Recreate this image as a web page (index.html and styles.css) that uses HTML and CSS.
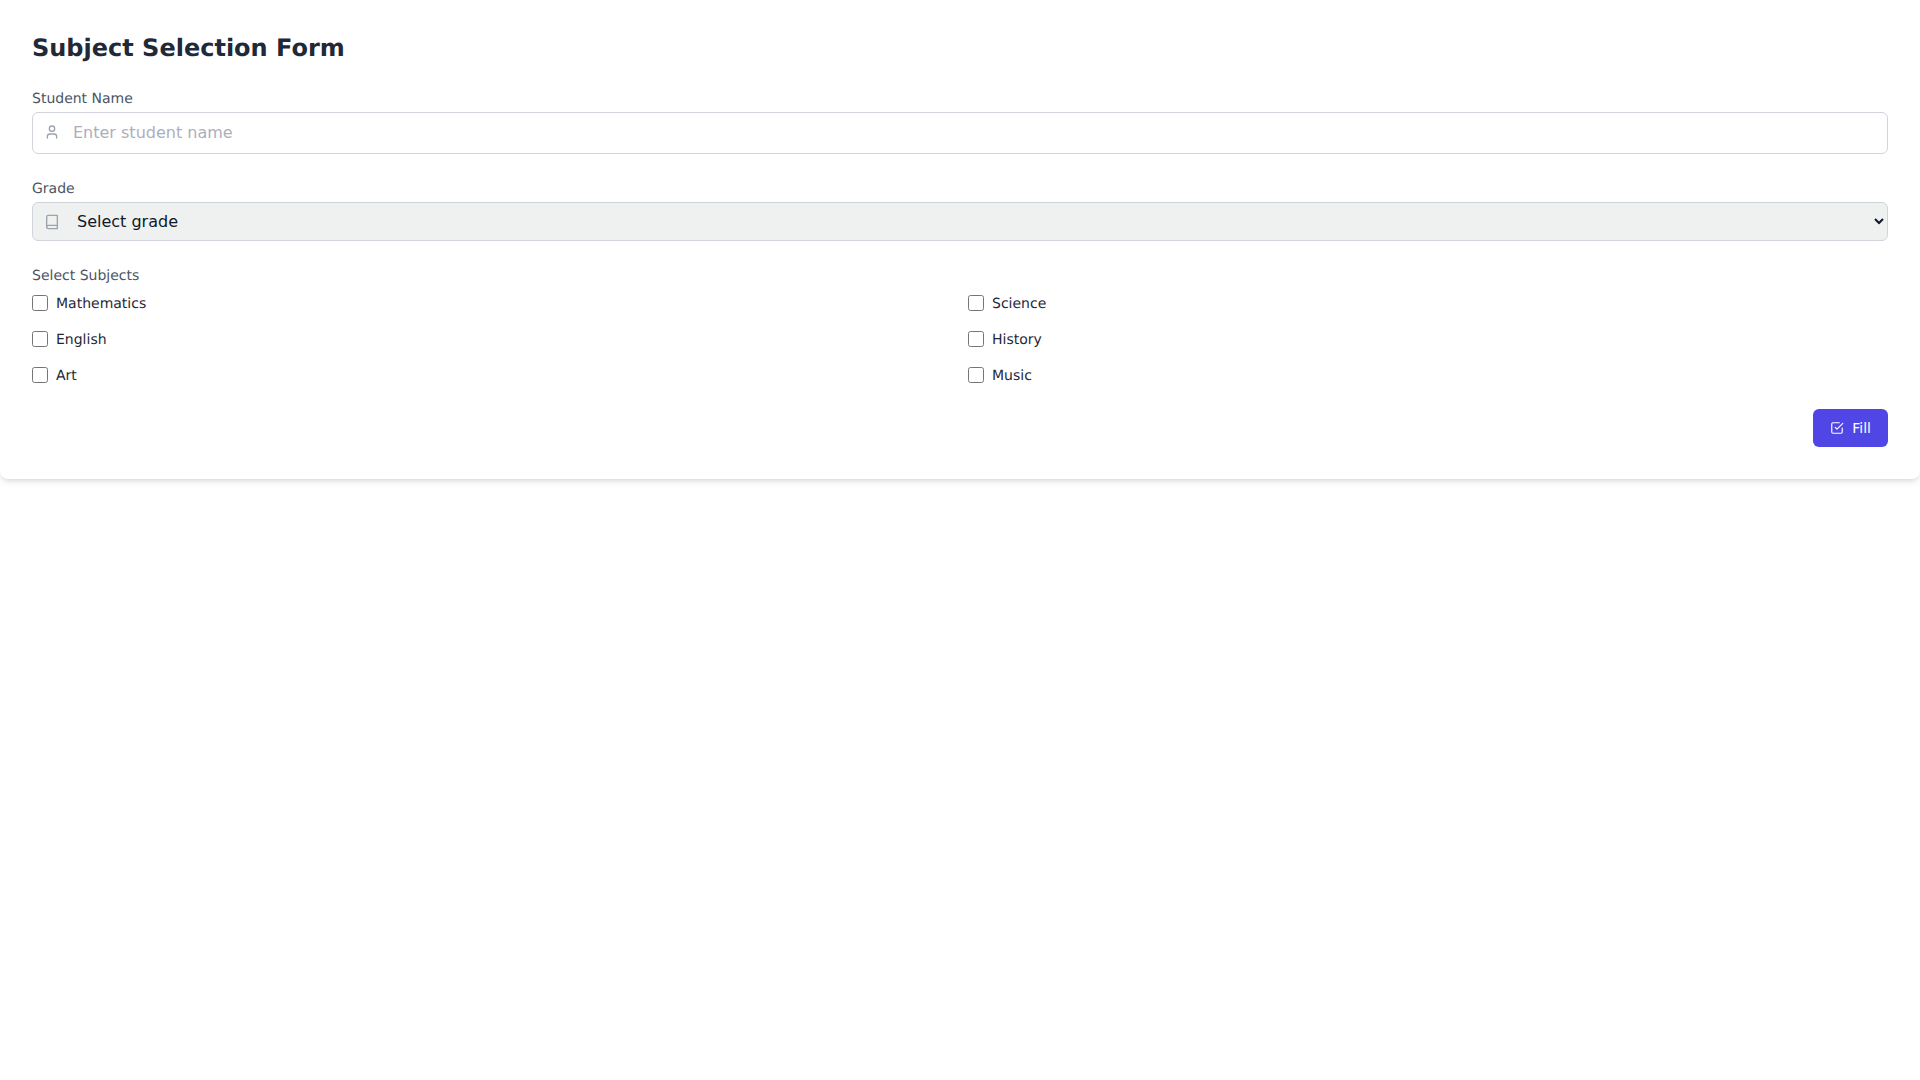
FILE: index.html
```html
<!DOCTYPE html>
<html lang="en">
<head>
<meta charset="utf-8">
<title>Subject Selection Form</title>
<link rel="stylesheet" href="styles.css">
</head>
<body>
<main class="page">
<form class="card">
  <h1 class="title">Subject Selection Form</h1>
  <div class="field">
    <label class="label" for="name">Student Name</label>
    <div class="control">
      <svg class="icon icon-user" viewBox="0 0 24 24"><path d="M19 21v-2a4 4 0 0 0-4-4H9a4 4 0 0 0-4 4v2"/><circle cx="12" cy="7" r="4"/></svg>
      <input class="input" id="name" type="text" placeholder="Enter student name">
    </div>
  </div>
  <div class="field">
    <label class="label" for="grade">Grade</label>
    <div class="control">
      <svg class="icon" viewBox="0 0 24 24"><path d="M4 19.500A2.500 2.500 0 0 1 6.500 17H20"/><path d="M6.500 2H20v20H6.500A2.500 2.500 0 0 1 4 19.500v-15A2.500 2.500 0 0 1 6.500 2z"/></svg>
      <select class="select" id="grade"><option>Select grade</option></select>
    </div>
  </div>
  <div class="subjects">
    <span class="label">Select Subjects</span>
    <div class="grid">
      <label class="check"><input class="box" type="checkbox"><span class="check-text">Mathematics</span></label>
      <label class="check"><input class="box" type="checkbox"><span class="check-text">Science</span></label>
      <label class="check"><input class="box" type="checkbox"><span class="check-text">English</span></label>
      <label class="check"><input class="box" type="checkbox"><span class="check-text">History</span></label>
      <label class="check"><input class="box" type="checkbox"><span class="check-text">Art</span></label>
      <label class="check"><input class="box" type="checkbox"><span class="check-text">Music</span></label>
    </div>
  </div>
  <div class="actions">
    <button class="button" type="button">
      <svg class="btn-icon" viewBox="0 0 24 24"><path d="m9 11 3 3L22 4"/><path d="M21 12v7a2 2 0 0 1-2 2H5a2 2 0 0 1-2-2V5a2 2 0 0 1 2-2h11"/></svg>
      <span class="btn-text">Fill</span>
    </button>
  </div>
</form>
</main>
</body>
</html>
```
FILE: styles.css
```css
* { box-sizing: border-box; }
html, body { margin: 0; padding: 0; background: #fff; }
body { font-family: "DejaVu Sans", sans-serif; color: #1f2937; text-rendering: geometricPrecision; }
.page { min-height: 100vh; }
.card {
  background: #fff;
  padding: 32px;
  border-radius: 8px;
  box-shadow: 0 4px 6px -1px rgba(0,0,0,.1), 0 2px 4px -2px rgba(0,0,0,.1);
}
.title { margin: 0 0 24px; font-size: 24px; line-height: 32px; font-weight: 700; color: #1f2937; }
.field { margin-bottom: 24px; }
.label { display: block; font-size: 14px; line-height: 20px; padding-top: 1px; color: #4b5563; margin-bottom: 3px; }
.control { position: relative; }
.icon {
  position: absolute; left: 12px; top: 50%; transform: translateY(-50%);
  width: 16px; height: 16px; fill: none; stroke: #9ca3af; stroke-width: 2;
  stroke-linecap: round; stroke-linejoin: round; pointer-events: none;
}
.icon-user { margin-top: -1px; }
.input {
  display: block; width: 100%; height: 42px; padding: 7px 16px 9px 40px;
  font: 16px/24px "DejaVu Sans", sans-serif; color: #1f2937;
  border: 1px solid #d1d5db; border-radius: 6px; background: #fff; outline: none;
}
.input::placeholder { color: #adaebc; }
.select {
  display: block; width: 100%; height: 39px; padding: 8px 16px 8px 40px;
  font: 16px "DejaVu Sans", sans-serif; color: #111827;
  border: 1px solid #d1d5db; border-radius: 6px; background-color: #eff1f1;
}
.subjects { margin-bottom: 24px; }
.subjects .label { margin-bottom: 7px; }
.grid { display: grid; grid-template-columns: 1fr 1fr; column-gap: 16px; row-gap: 16px; }
.check { display: flex; align-items: center; gap: 8px; font-size: 14px; line-height: 20px; color: #1f2937; }
.check-text { padding-top: 1px; margin-bottom: -1px; }
.box { width: 16px; height: 16px; margin: 0; }
.actions { display: flex; justify-content: flex-end; }
.button {
  display: flex; align-items: center; gap: 8px; height: 38px; padding: 0 17px;
  background: #4f46e5; color: #fff; border: 0; border-radius: 6px;
  font: 14px/20px "DejaVu Sans", sans-serif;
}
.btn-icon {
  width: 14px; height: 14px; fill: none; stroke: currentColor; stroke-width: 2;
  stroke-linecap: round; stroke-linejoin: round;
}
```
